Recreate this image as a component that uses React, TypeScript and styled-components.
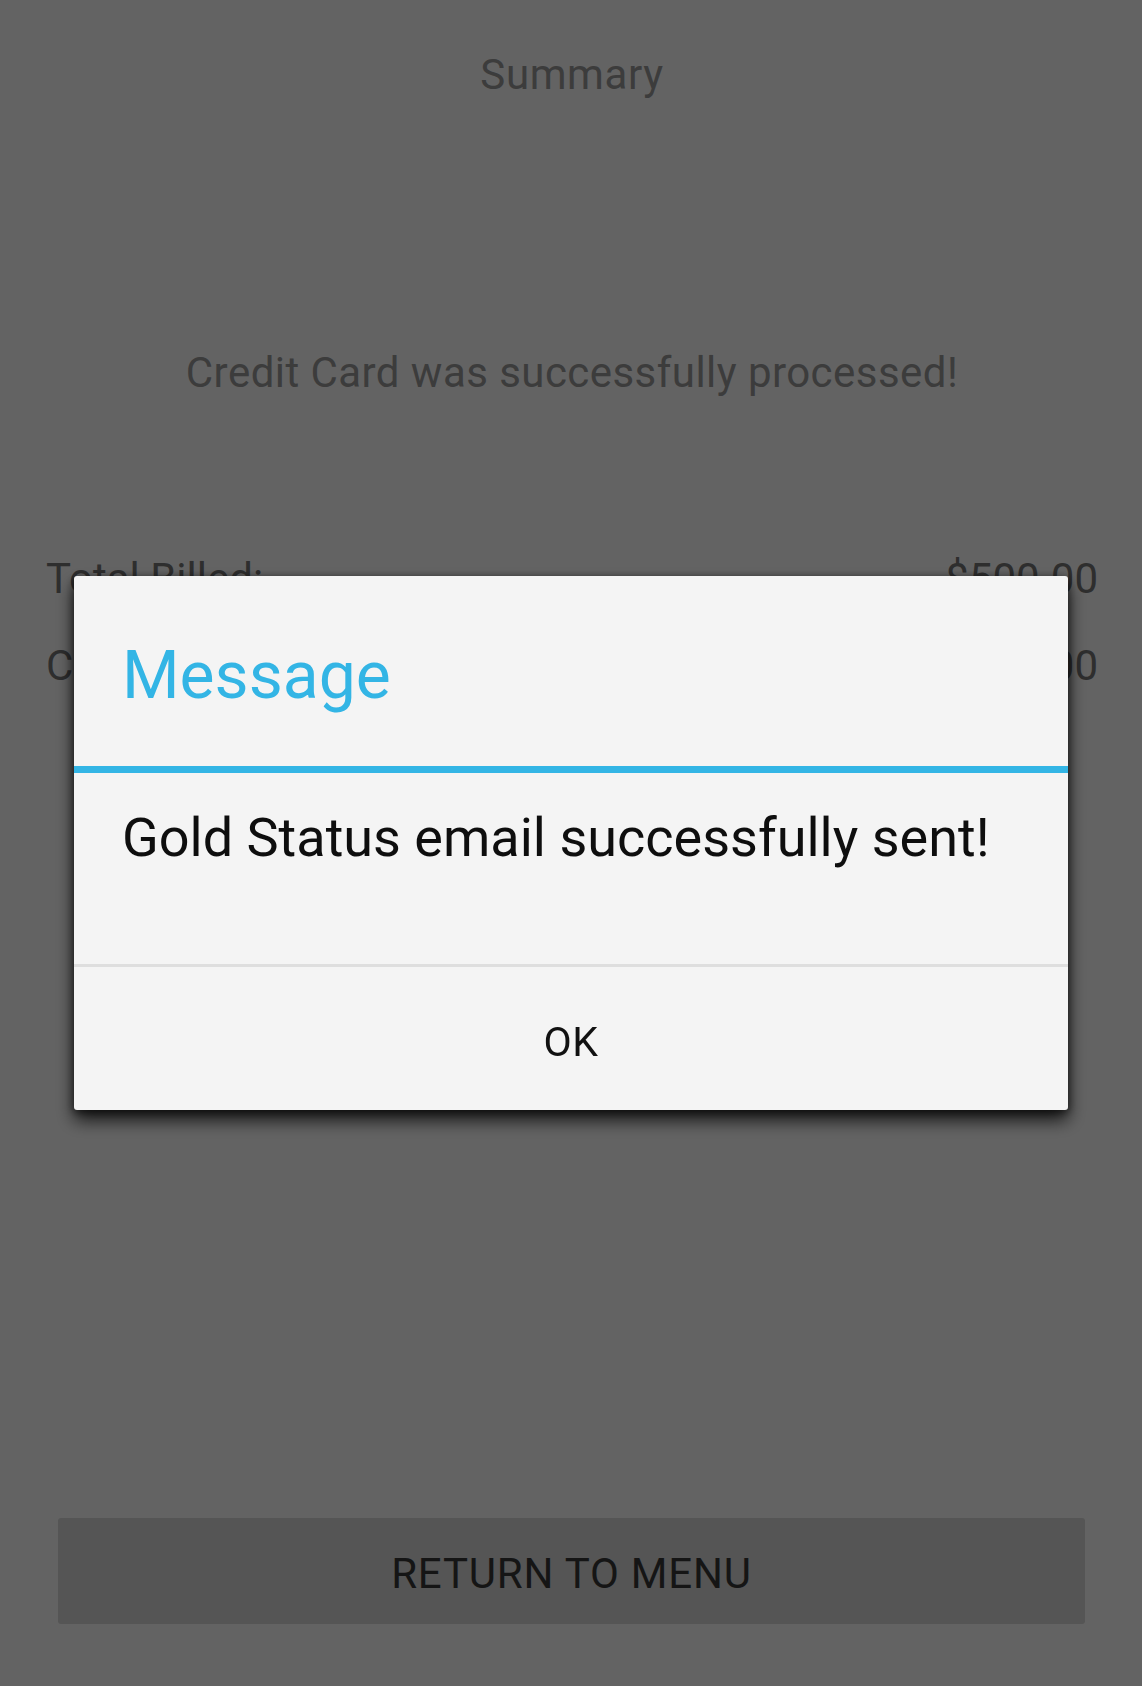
import React, { FC } from 'react'
import styled, { createGlobalStyle } from 'styled-components'

const GlobalStyle = createGlobalStyle`
  html,
  body {
    margin: 0;
    padding: 0;
    background: #ffffff;
    font-family: Roboto, 'Noto Sans', sans-serif;
  }

  * {
    box-sizing: border-box;
  }
`

const StyledPage = styled.main`
  display: flex;
  flex-direction: column;
  min-height: 1686px;
  padding: 0 44px 62px 46px;
  background: #ffffff;
`

const StyledHeading = styled.h1`
  margin: 51px 0 0;
  font-size: 42px;
  line-height: 48px;
  font-weight: 400;
  letter-spacing: 0.6px;
  color: #9a9a9a;
  text-align: center;
`

const StyledStatus = styled.p`
  margin: 250px 0 0;
  font-size: 42px;
  line-height: 48px;
  letter-spacing: 0.45px;
  color: #9a9a9a;
  text-align: center;
`

const StyledTotals = styled.dl`
  display: grid;
  grid-template-columns: 1fr auto;
  row-gap: 38px;
  margin: 157px 0 0;

  dt,
  dd {
    margin: 0;
    font-size: 42px;
    line-height: 49px;
    color: #767676;
  }

  dd {
    text-align: right;
  }
`

const StyledMenuButton = styled.button`
  margin: auto 13px 0 12px;
  height: 106px;
  padding: 4px 0 0;
  border: none;
  border-radius: 3px;
  background: #dadada;
  font-family: inherit;
  font-size: 42px;
  letter-spacing: 0.8px;
  color: #383838;
`

const StyledScrim = styled.div`
  position: fixed;
  inset: 0;
  display: flex;
  align-items: center;
  justify-content: center;
  background: rgba(0, 0, 0, 0.61);
`

const StyledDialog = styled.section`
  display: flex;
  flex-direction: column;
  width: 994px;
  height: 534px;
  border-radius: 3px;
  background: #f4f4f4;
  box-shadow: 0 10px 18px rgba(0, 0, 0, 0.8), 0 2px 8px rgba(0, 0, 0, 0.55);
  overflow: hidden;
`

const StyledDialogTitle = styled.h2`
  margin: 0;
  padding: 62px 48px 52px;
  border-bottom: 7px solid #33b5e5;
  font-size: 66px;
  line-height: 76px;
  font-weight: 400;
  color: #33b5e5;
`

const StyledDialogBody = styled.p`
  flex: 1;
  margin: 0;
  padding: 33px 48px 0;
  border-bottom: 3px solid #dedede;
  font-size: 54px;
  line-height: 63px;
  color: #0e0e0e;
`

const StyledDialogAction = styled.button`
  height: 143px;
  padding: 6px 0 0;
  border: none;
  background: transparent;
  font-family: inherit;
  font-size: 41px;
  line-height: 48px;
  letter-spacing: 0.5px;
  color: #111111;
`

const totals = [
  { label: 'Total Billed:', value: '$500.00' },
  { label: 'Credit Card Charged:', value: '$500.00' },
]

const App: FC = () => (
  <>
    <GlobalStyle />
    <StyledPage>
      <StyledHeading>Summary</StyledHeading>
      <StyledStatus>Credit Card was successfully processed!</StyledStatus>
      <StyledTotals>
        {totals.map(row => (
          <React.Fragment key={row.label}>
            <dt>{row.label}</dt>
            <dd>{row.value}</dd>
          </React.Fragment>
        ))}
      </StyledTotals>
      <StyledMenuButton>RETURN TO MENU</StyledMenuButton>
    </StyledPage>
    <StyledScrim>
      <StyledDialog>
        <StyledDialogTitle>Message</StyledDialogTitle>
        <StyledDialogBody>Gold Status email successfully sent!</StyledDialogBody>
        <StyledDialogAction>OK</StyledDialogAction>
      </StyledDialog>
    </StyledScrim>
  </>
)

export default App
